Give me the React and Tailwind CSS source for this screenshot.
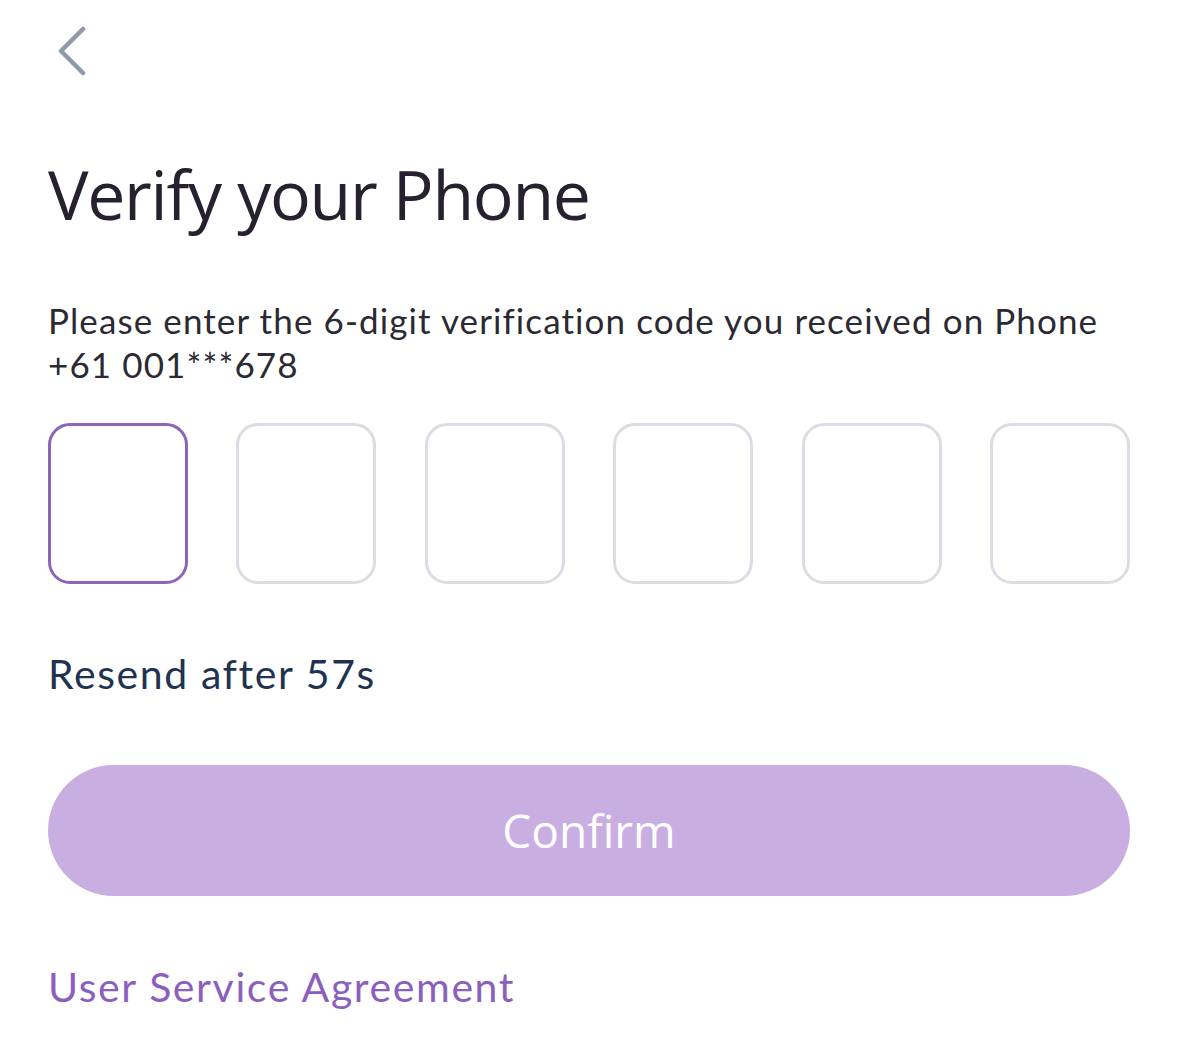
import React from "react";

const BODY = { fontFamily: "Lato, 'Noto Sans', sans-serif" };

export default function App() {
  const digits = [0, 1, 2, 3, 4, 5];

  return (
    <div className="min-h-[1038px] w-[1178px] bg-white px-[48px]" style={BODY}>
      <div className="pt-[26px] pl-[8px]">
        <svg width="32" height="50" viewBox="0 0 32 50" fill="none">
          <path
            d="M27 3 L5 25 L27 47"
            stroke="#8f99a8"
            strokeWidth="4.5"
            strokeLinecap="round"
            strokeLinejoin="round"
          />
        </svg>
      </div>

      <h1
        className="mt-[74px] text-[68px] leading-[88px] text-[#27212f] tracking-[-1.3px]"
        style={{ fontFamily: "'Open Sans', 'Noto Sans', sans-serif" }}
      >
        Verify your Phone
      </h1>

      <p className="mt-[60px] text-[35px] leading-[44px] text-[#2b2a33] tracking-[1.1px]">
        Please enter the 6-digit verification code you received on Phone
        <br />
        +61 001***678
      </p>

      <div className="mt-[37px] flex justify-between">
        {digits.map((d) => (
          <div
            key={d}
            className={
              d === 0
                ? "h-[161px] w-[140px] rounded-[22px] border-[3px] border-[#8c64ba]"
                : "h-[161px] w-[140px] rounded-[22px] border-[3px] border-[#dddce5]"
            }
          />
        ))}
      </div>

      <div className="mt-[65px] text-[41px] leading-[50px] text-[#1f3350] tracking-[1.6px]">
        Resend after 57s
      </div>

      <button
        type="button"
        className="mt-[66px] flex h-[131px] w-full items-center justify-center rounded-full bg-[#c9aee2] text-[46px] text-white"
        style={{ fontFamily: "'Open Sans', 'Noto Sans', sans-serif" }}
      >
        Confirm
      </button>

      <div className="mt-[66px] text-[41px] leading-[50px] text-[#8b5fbf] tracking-[1.6px]">
        User Service Agreement
      </div>
    </div>
  );
}
